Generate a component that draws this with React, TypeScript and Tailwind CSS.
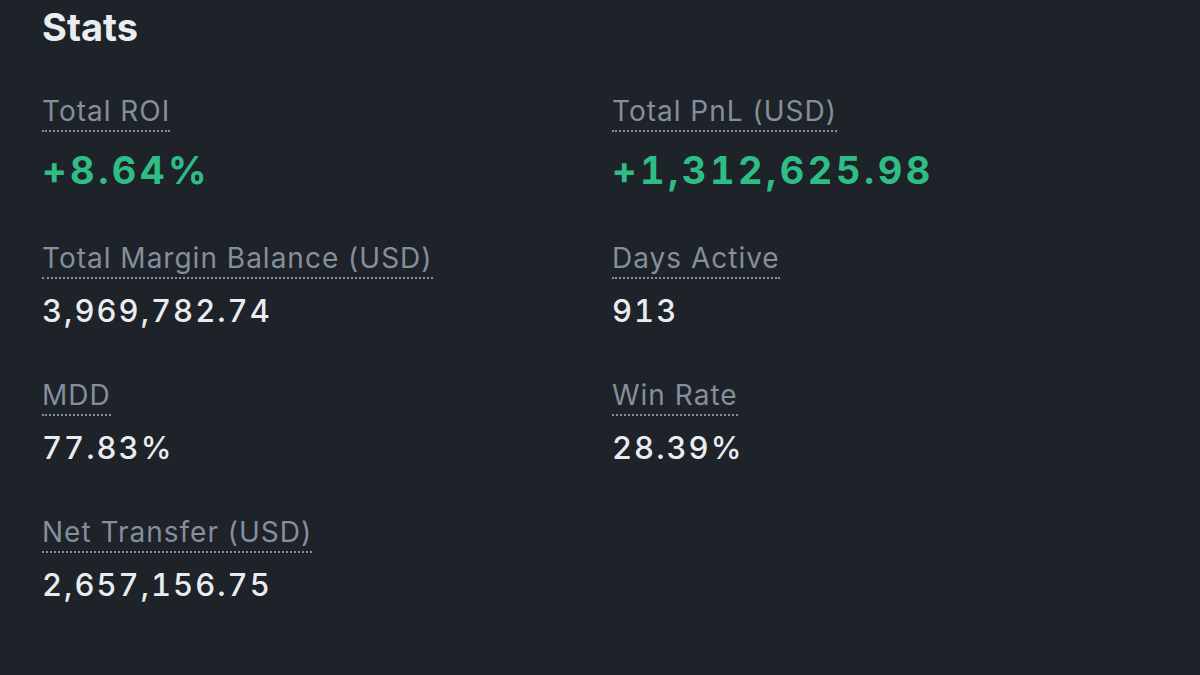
const stats = [
  { label: "Total ROI", value: "+8.64%", accent: true },
  { label: "Total PnL (USD)", value: "+1,312,625.98", accent: true },
  { label: "Total Margin Balance (USD)", value: "3,969,782.74" },
  { label: "Days Active", value: "913" },
  { label: "MDD", value: "77.83%" },
  { label: "Win Rate", value: "28.39%" },
  { label: "Net Transfer (USD)", value: "2,657,156.75" },
]

export default function App() {
  return (
    <div
      className="w-[1200px] h-[675px] bg-[#1e2229] pl-[42px] pt-[3px] overflow-hidden"
      style={{ fontFamily: "Inter, 'Noto Sans', sans-serif" }}
    >
      <h2 className="text-[38px] font-bold text-[#eaecef] leading-[48px]">Stats</h2>
      <div className="grid grid-cols-[570px_1fr] mt-[41px] gap-y-[45px]">
        {stats.map((s) => (
          <div key={s.label} className="flex flex-col items-start">
            <span className="text-[28px] leading-[38px] tracking-[1px] text-[#848e9c] border-b-2 border-dotted border-[#848e9c]">
              {s.label}
            </span>
            {s.accent ? (
              <span className="mt-[15px] text-[38px] leading-[47px] font-bold tabular-nums tracking-[3.5px] text-[#2ebd85]">
                {s.value}
              </span>
            ) : (
              <span className="mt-[12px] text-[31px] leading-[40px] font-medium tabular-nums tracking-[2px] text-[#eaecef]">
                {s.value}
              </span>
            )}
          </div>
        ))}
      </div>
    </div>
  )
}
